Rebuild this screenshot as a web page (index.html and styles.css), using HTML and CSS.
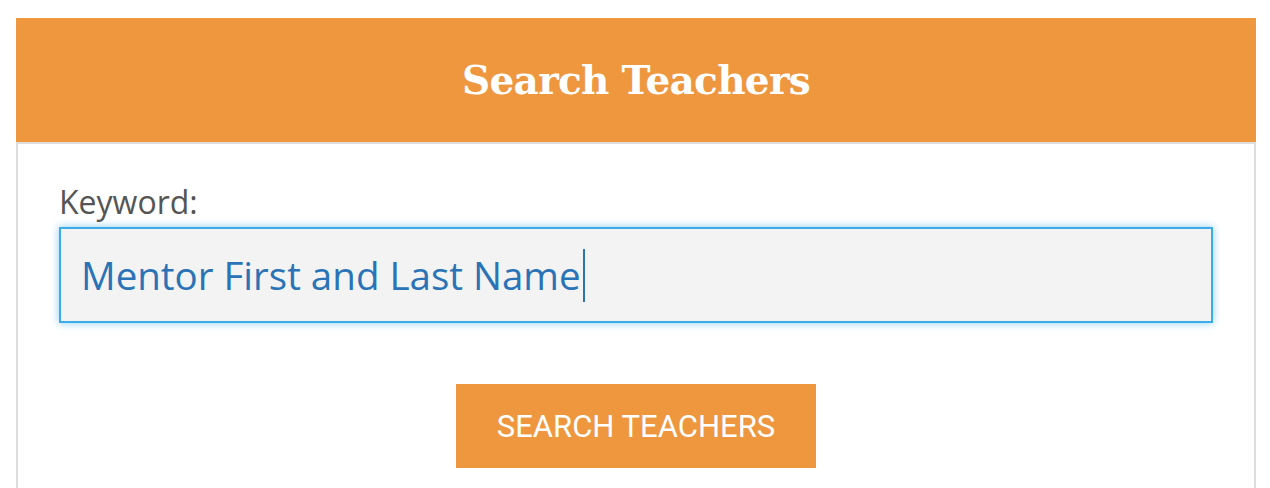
FILE: index.html
```html
<!DOCTYPE html>
<html lang="en">
<head>
  <meta charset="UTF-8" />
  <meta name="viewport" content="width=device-width, initial-scale=1.0" />
  <title>Search Teachers</title>
  <link rel="stylesheet" href="styles.css">
</head>
<body>
  <div class="panel">
    <div class="panel-heading">
      <h1>Search Teachers</h1>
    </div>
    <div class="panel-body">
      <label for="keyword">Keyword:</label>
      <div class="field">
        <span class="field-text">Mentor First and Last Name</span><span class="caret"></span>
      </div>
      <div class="actions">
        <button type="button">SEARCH TEACHERS</button>
      </div>
    </div>
  </div>
</body>
</html>
```

FILE: styles.css
```css
body {
  margin: 0;
  padding: 18px 14px 0 16px;
  background-color: #ffffff;
  font-family: 'Open Sans', 'Noto Sans', sans-serif;
}

.panel {
  width: 1240px;
}

.panel-heading {
  background-color: #ee973f;
  height: 124px;
  display: flex;
  align-items: center;
  justify-content: center;
}

.panel-heading h1 {
  margin: 0;
  color: #ffffff;
  font-family: 'DejaVu Serif', serif;
  font-weight: bold;
  font-size: 39px;
  letter-spacing: -0.7px;
}

.panel-body {
  border: 2px solid #dddddd;
  padding: 38px 41px 60px;
  height: 400px;
}

label {
  display: block;
  color: #555555;
  font-size: 32px;
  line-height: 40px;
  margin-bottom: 5px;
}

.field {
  display: flex;
  align-items: center;
  height: 92px;
  padding: 0 20px;
  background-color: #f3f3f3;
  border: 2px solid #3cace8;
  box-shadow: 0 0 8px rgba(60, 172, 232, 0.6);
}

.field-text {
  color: #2a73b6;
  font-size: 38.5px;
}

.caret {
  display: inline-block;
  width: 2px;
  height: 53px;
  margin-left: 2px;
  background-color: #2a73b6;
}

.actions {
  display: flex;
  justify-content: center;
  margin-top: 61px;
}

button {
  width: 360px;
  height: 84px;
  padding: 0;
  background-color: #ee973f;
  color: #ffffff;
  border: none;
  font-family: Roboto, sans-serif;
  font-size: 31px;
  cursor: pointer;
}
```
